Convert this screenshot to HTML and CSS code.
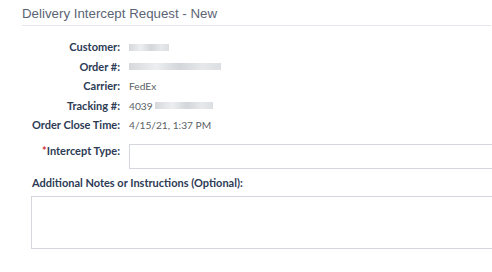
FILE: index.html
```html
<!DOCTYPE html>
<html lang="en">
<head>
    <meta charset="UTF-8">
    <title>Delivery Intercept Request</title>
    <link rel="stylesheet" href="styles.css">
</head>
<body>

<div class="page">
    <h2 class="page-title">Delivery Intercept Request - New</h2>

    <form class="intercept-form">
        <div class="info-grid">
            <label>Customer:</label>
            <span class="value"><span class="blur w-40"></span></span>

            <label>Order #:</label>
            <span class="value"><span class="blur w-92"></span></span>

            <label>Carrier:</label>
            <span class="value">FedEx</span>

            <label>Tracking #:</label>
            <span class="value">4039<span class="blur w-58"></span></span>

            <label>Order Close Time:</label>
            <span class="value">4/15/21, 1:37 PM</span>

            <label class="field-label"><span class="required">*</span>Intercept Type:</label>
            <input type="text" class="text-input">
        </div>

        <div class="notes">
            <label class="notes-label">Additional Notes or Instructions (Optional):</label>
            <textarea class="notes-input"></textarea>
        </div>
    </form>
</div>

</body>
</html>
```

FILE: styles.css
```css
html, body {
    margin: 0;
    padding: 0;
    overflow: hidden;
    background: #fff;
}

.page {
    padding: 6px 1px 0 22px;
}

.page-title {
    font-family: "Liberation Sans", Arial, sans-serif;
    font-size: 13.3px;
    font-weight: normal;
    color: #5b6475;
    margin: 0;
    padding-bottom: 4px;
    border-bottom: 1px solid #e3e6ea;
}

.intercept-form {
    font-family: Lato, "Noto Sans", sans-serif;
    font-size: 11px;
    padding-left: 10px;
    margin-top: 14px;
    white-space: nowrap;
}

.info-grid {
    display: grid;
    grid-template-columns: 88px 600px;
    column-gap: 9px;
    row-gap: 5px;
    align-items: center;
}

.info-grid label {
    text-align: right;
    font-weight: bold;
    color: #2d3b55;
    line-height: 14.5px;
}

.value {
    color: #5a5f66;
    font-size: 10.2px;
    line-height: 14.5px;
    display: flex;
    align-items: center;
}

.blur {
    display: inline-block;
    height: 7px;
    background: linear-gradient(90deg, #d6d8dc, #eceef0 30%, #d3d6da 55%, #e6e8eb 80%, #dcdfe2);
}

.w-40 { width: 40px; }
.w-92 { width: 92px; }
.w-58 { width: 58px; margin-left: 2px; }

.required {
    color: #d2323a;
}

.field-label {
    align-self: start;
    padding-top: 6px;
}

.text-input {
    box-sizing: border-box;
    height: 25px;
    width: 600px;
    margin-top: 6px;
    border: 1px solid #d4d8de;
    border-radius: 0;
    padding: 0;
}

.notes {
    margin-top: 7px;
}

.notes-label {
    display: block;
    font-weight: bold;
    color: #2d3b55;
    line-height: 14px;
}

.notes-input {
    display: block;
    box-sizing: border-box;
    width: 600px;
    height: 53px;
    margin: 6px 0 0 -1px;
    border: 1px solid #d4d8de;
    border-radius: 0;
    resize: none;
}
```
